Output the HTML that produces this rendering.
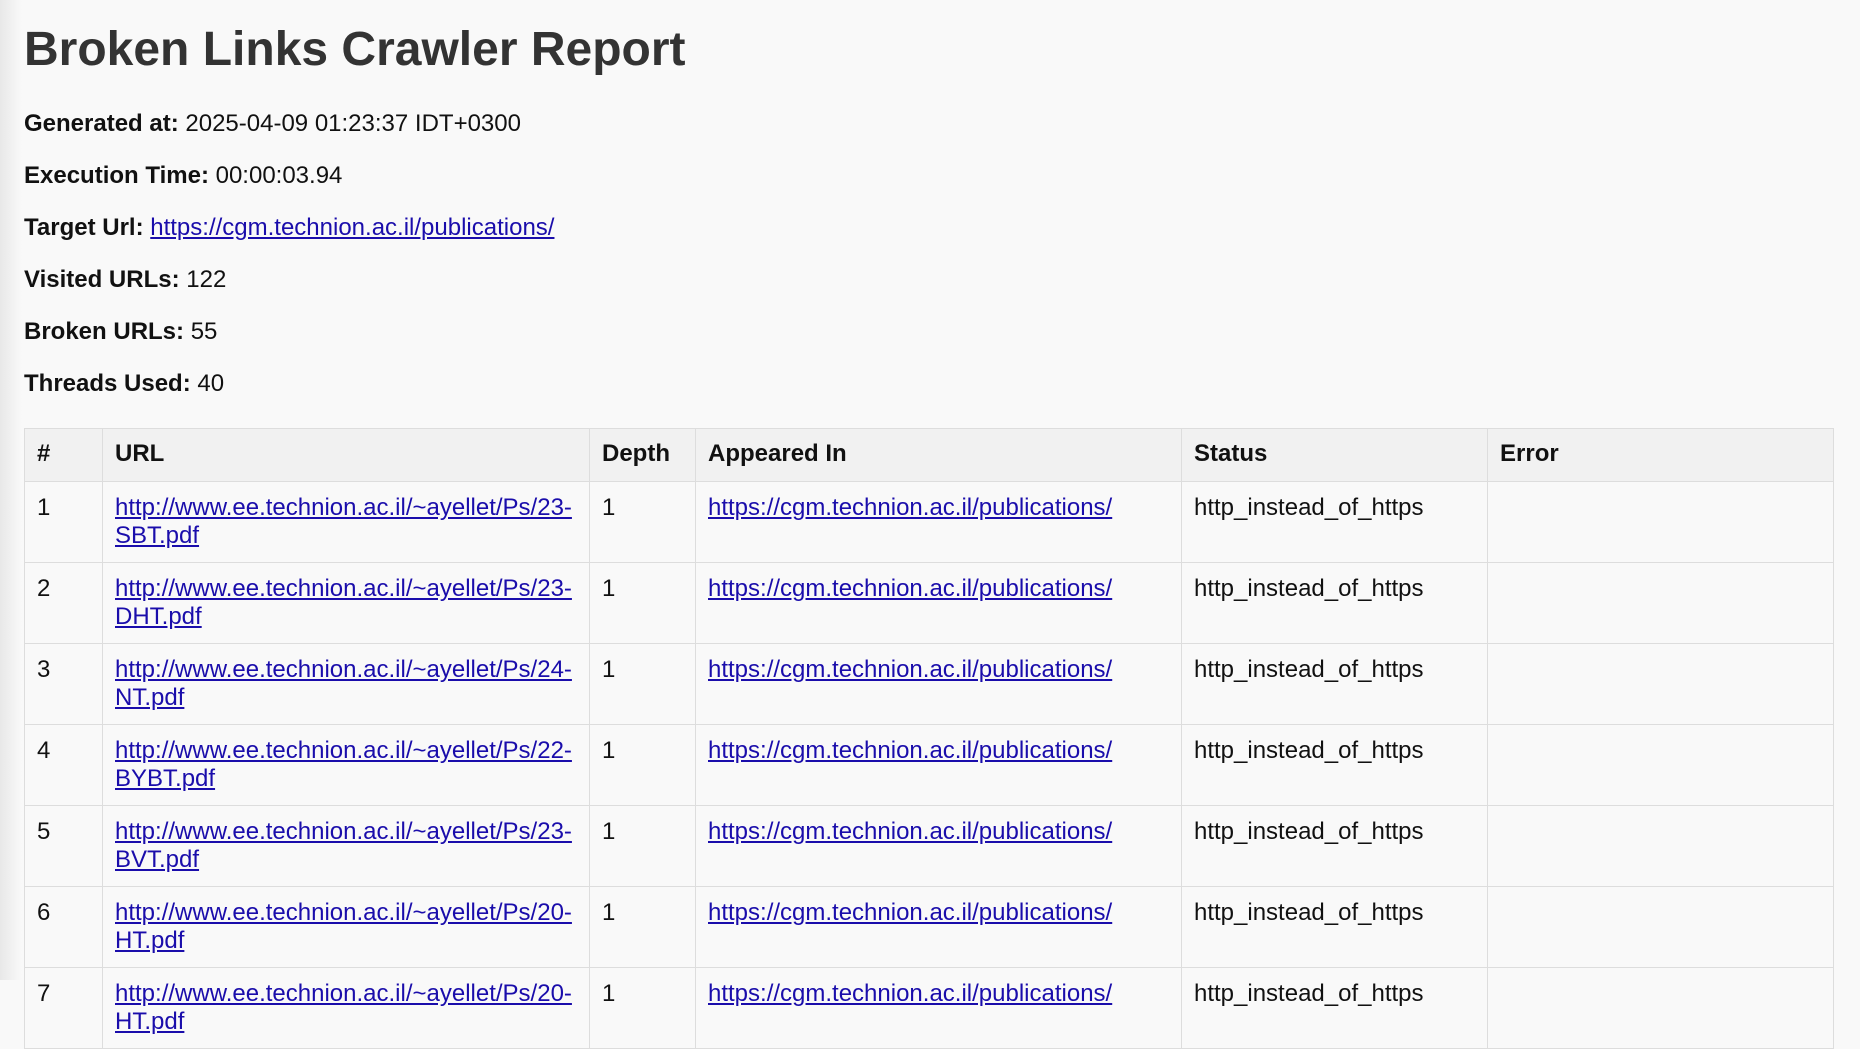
<!DOCTYPE html>
<html><head><meta charset="utf-8"><style>
html,body{margin:0;padding:0}
body{width:1860px;height:980px;overflow:hidden;background:#f9f9f9;font-family:"Liberation Sans",Arial,sans-serif;color:#222;font-size:24px;position:relative}
.edge{position:absolute;left:0;top:0;width:22px;height:980px;background:linear-gradient(to right,#e8e8e8,#f9f9f9)}
.wrap{position:absolute;left:24px;top:0;right:0}
h1{margin:0;position:absolute;top:20px;font-size:48px;font-weight:bold;color:#333;line-height:60px;white-space:nowrap}
.p{position:absolute;left:0;line-height:28px;white-space:nowrap;color:#111}
a{color:#1a0dab;text-decoration:underline}
table{position:absolute;left:0;top:428px;border-collapse:collapse;width:1809px;table-layout:fixed;background:#f9f9f9}
th,td{border:1px solid #ddd;text-align:left;vertical-align:top;padding:12px 12px;line-height:28px;color:#111}
th{background:#f1f1f1;font-weight:bold;padding:11px 12px 10px;height:31px}
td{height:56px}
</style></head><body>
<div class="edge"></div>
<div class="wrap">
<h1>Broken Links Crawler Report</h1>
<div class="p" style="top:110px"><b>Generated at:</b> 2025-04-09 01:23:37 IDT+0300</div>
<div class="p" style="top:162px"><b>Execution Time:</b> 00:00:03.94</div>
<div class="p" style="top:214px"><b>Target Url:</b> <a>https://cgm.technion.ac.il/publications/</a></div>
<div class="p" style="top:266px"><b>Visited URLs:</b> 122</div>
<div class="p" style="top:318px"><b>Broken URLs:</b> 55</div>
<div class="p" style="top:370px"><b>Threads Used:</b> 40</div>
<table>
<colgroup><col style="width:78px"><col style="width:487px"><col style="width:106px"><col style="width:486px"><col style="width:306px"><col style="width:346px"></colgroup>
<tr><th>#</th><th>URL</th><th>Depth</th><th>Appeared In</th><th>Status</th><th>Error</th></tr>
<tr><td>1</td><td><a>http://www.ee.technion.ac.il/~ayellet/Ps/23-SBT.pdf</a></td><td>1</td><td><a>https://cgm.technion.ac.il/publications/</a></td><td>http_instead_of_https</td><td></td></tr>
<tr><td>2</td><td><a>http://www.ee.technion.ac.il/~ayellet/Ps/23-DHT.pdf</a></td><td>1</td><td><a>https://cgm.technion.ac.il/publications/</a></td><td>http_instead_of_https</td><td></td></tr>
<tr><td>3</td><td><a>http://www.ee.technion.ac.il/~ayellet/Ps/24-NT.pdf</a></td><td>1</td><td><a>https://cgm.technion.ac.il/publications/</a></td><td>http_instead_of_https</td><td></td></tr>
<tr><td>4</td><td><a>http://www.ee.technion.ac.il/~ayellet/Ps/22-BYBT.pdf</a></td><td>1</td><td><a>https://cgm.technion.ac.il/publications/</a></td><td>http_instead_of_https</td><td></td></tr>
<tr><td>5</td><td><a>http://www.ee.technion.ac.il/~ayellet/Ps/23-BVT.pdf</a></td><td>1</td><td><a>https://cgm.technion.ac.il/publications/</a></td><td>http_instead_of_https</td><td></td></tr>
<tr><td>6</td><td><a>http://www.ee.technion.ac.il/~ayellet/Ps/20-HT.pdf</a></td><td>1</td><td><a>https://cgm.technion.ac.il/publications/</a></td><td>http_instead_of_https</td><td></td></tr>
<tr><td>7</td><td><a>http://www.ee.technion.ac.il/~ayellet/Ps/20-HT.pdf</a></td><td>1</td><td><a>https://cgm.technion.ac.il/publications/</a></td><td>http_instead_of_https</td><td></td></tr>
</table>
</div>
</body></html>
